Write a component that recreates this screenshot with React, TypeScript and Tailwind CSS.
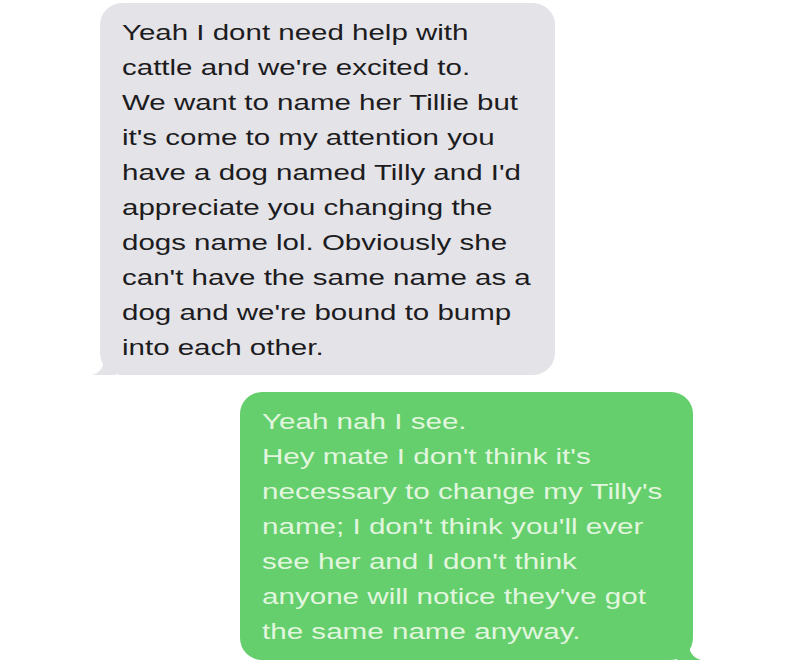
import React from "react";

const grayLines = [
  "Yeah I dont need help with",
  "cattle and we're excited to.",
  "We want to name her Tillie but",
  "it's come to my attention you",
  "have a dog named Tilly and I'd",
  "appreciate you changing the",
  "dogs name lol. Obviously she",
  "can't have the same name as a",
  "dog and we're bound to bump",
  "into each other.",
];

const greenLines = [
  "Yeah nah I see.",
  "Hey mate I don't think it's",
  "necessary to change my Tilly's",
  "name; I don't think you'll ever",
  "see her and I don't think",
  "anyone will notice they've got",
  "the same name anyway.",
];

export default function App() {
  return (
    <div
      className="w-[800px] h-[666px] bg-white overflow-hidden flex flex-col"
      style={{ fontFamily: '"Liberation Sans", Arial, sans-serif' }}
    >
      <div className="relative ml-[100px] mt-[3px] w-[455px] h-[372px] rounded-[22px] bg-[#e4e3e8] pl-[22px] pt-[12px] text-[22px] leading-[35px] text-[#1c1c20]">
        <div className="origin-left scale-x-[1.34]">
          {grayLines.map((l, i) => (
            <div key={i} className="whitespace-nowrap">{l}</div>
          ))}
        </div>
        <svg className="absolute left-[-8px] bottom-0" width="24" height="20" viewBox="0 0 24 20">
          <path d="M24 0 L24 20 L0 20 C8 18 12 12 14 0 Z" fill="#e4e3e8" />
        </svg>
      </div>
      <div className="relative ml-[240px] mt-[17px] w-[453px] h-[268px] rounded-[22px] bg-[#64cf6c] pl-[22px] pt-[12px] text-[22px] leading-[35px] text-[#e2f6df]">
        <div className="origin-left scale-x-[1.345]">
          {greenLines.map((l, i) => (
            <div key={i} className="whitespace-nowrap">{l}</div>
          ))}
        </div>
        <svg className="absolute right-[-8px] bottom-0" width="24" height="20" viewBox="0 0 24 20">
          <path d="M0 0 L0 20 L24 20 C16 18 12 12 10 0 Z" fill="#64cf6c" />
        </svg>
      </div>
    </div>
  );
}
